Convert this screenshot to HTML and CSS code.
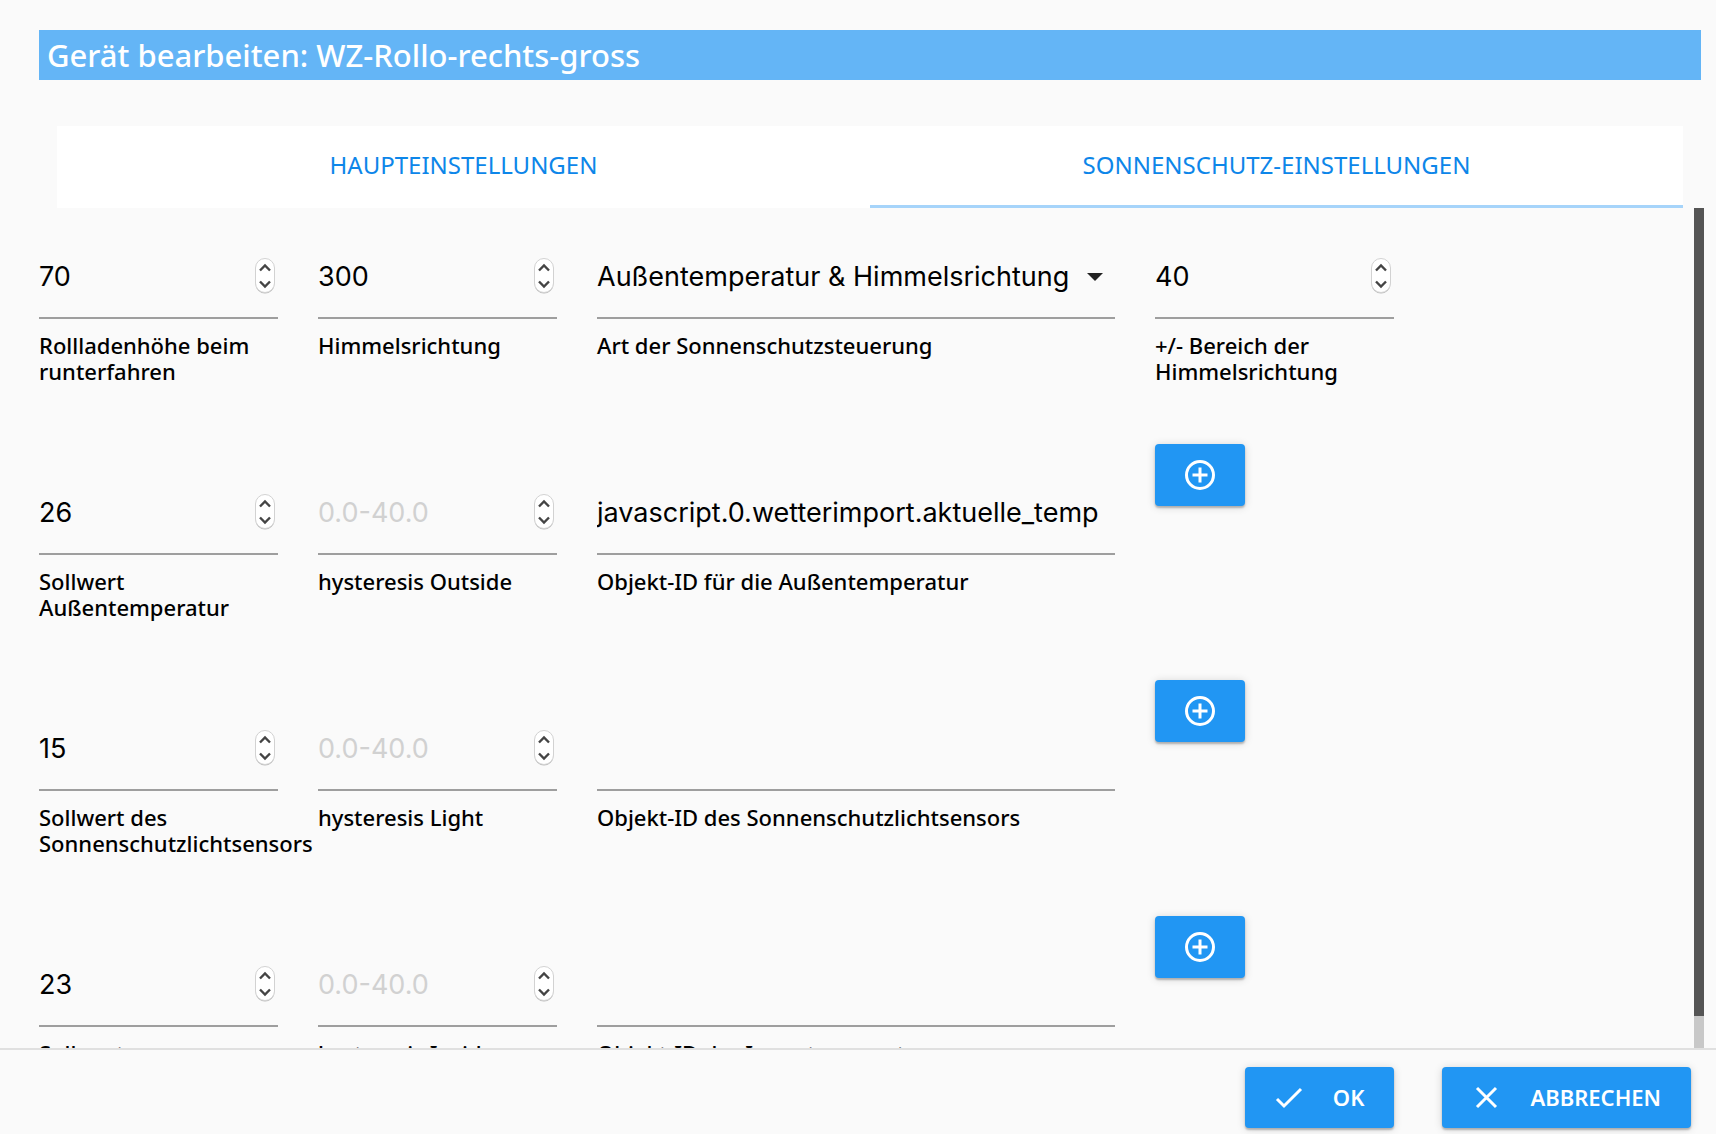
FILE: index.html
```html
<!DOCTYPE html>
<html lang="de">
<head>
<meta charset="utf-8">
<meta name="viewport" content="width=device-width, initial-scale=1">
<title>Gerät bearbeiten</title>
<link rel="stylesheet" href="styles.css">
</head>
<body>
<svg class="sprite" aria-hidden="true">
  <symbol id="spin" viewBox="0 0 20 36">
    <rect x="0.5" y="1.5" width="19" height="34" rx="9.5" fill="#b9b9b9"/>
    <rect x="0.5" y="0.5" width="19" height="34" rx="9.5" fill="#fff" stroke="#d2d2d2"/>
    <path d="M5 12.500l5-5 5 5M5 23.500l5 5 5-5" fill="none" stroke="#444" stroke-width="2.400"/>
  </symbol>
  <symbol id="plus" viewBox="0 0 30 30">
    <circle cx="15" cy="15" r="13.500" fill="none" stroke="#fff" stroke-width="3"/>
    <path d="M15 7.500v15M7.500 15h15" stroke="#fff" stroke-width="3"/>
  </symbol>
</svg>
<form class="dialog">
  <h1 class="title">Gerät bearbeiten: WZ-Rollo-rechts-gross</h1>
  <nav class="tabs">
    <a class="tab" href="#main">HAUPTEINSTELLUNGEN</a>
    <a class="tab tab-active" href="#sun">SONNENSCHUTZ-EINSTELLUNGEN</a>
  </nav>
  <div class="body">
    <div class="rows" id="sun">
      <div class="row">
        <div class="field">
          <div class="control"><input class="input" id="height" type="number" value="70"><svg class="spin"><use href="#spin"/></svg></div>
          <label class="label" for="height">Rollladenhöhe beim runterfahren</label>
        </div>
        <div class="field">
          <div class="control"><input class="input" id="direction" type="number" value="300"><svg class="spin"><use href="#spin"/></svg></div>
          <label class="label" for="direction">Himmelsrichtung</label>
        </div>
        <div class="field field-wide">
          <div class="control">
            <select class="input" id="type"><option>Außentemperatur &amp; Himmelsrichtung</option></select>
            <svg class="caret" viewBox="0 0 16 8"><path d="M0 0h16l-8 8z" fill="#222"/></svg>
          </div>
          <label class="label" for="type">Art der Sonnenschutzsteuerung</label>
        </div>
        <div class="field">
          <div class="control"><input class="input" id="range" type="number" value="40"><svg class="spin"><use href="#spin"/></svg></div>
          <label class="label" for="range">+/- Bereich der Himmelsrichtung</label>
        </div>
      </div>
      <div class="row">
        <div class="field">
          <div class="control"><input class="input" id="outside" type="number" value="26"><svg class="spin"><use href="#spin"/></svg></div>
          <label class="label" for="outside">Sollwert Außentemperatur</label>
        </div>
        <div class="field">
          <div class="control"><input class="input" id="hyst-outside" type="number" placeholder="0.0-40.0"><svg class="spin"><use href="#spin"/></svg></div>
          <label class="label" for="hyst-outside">hysteresis Outside</label>
        </div>
        <div class="field field-wide">
          <div class="control"><input class="input" id="id-outside" type="text" value="javascript.0.wetterimport.aktuelle_temp"></div>
          <label class="label" for="id-outside">Objekt-ID für die Außentemperatur</label>
        </div>
        <button class="btn btn-add" type="button" aria-label="Objekt-ID wählen"><svg class="plus"><use href="#plus"/></svg></button>
      </div>
      <div class="row">
        <div class="field">
          <div class="control"><input class="input" id="light" type="number" value="15"><svg class="spin"><use href="#spin"/></svg></div>
          <label class="label" for="light">Sollwert des Sonnenschutzlichtsensors</label>
        </div>
        <div class="field">
          <div class="control"><input class="input" id="hyst-light" type="number" placeholder="0.0-40.0"><svg class="spin"><use href="#spin"/></svg></div>
          <label class="label" for="hyst-light">hysteresis Light</label>
        </div>
        <div class="field field-wide">
          <div class="control"><input class="input" id="id-light" type="text"></div>
          <label class="label" for="id-light">Objekt-ID des Sonnenschutzlichtsensors</label>
        </div>
        <button class="btn btn-add" type="button" aria-label="Objekt-ID wählen"><svg class="plus"><use href="#plus"/></svg></button>
      </div>
      <div class="row">
        <div class="field">
          <div class="control"><input class="input" id="inside" type="number" value="23"><svg class="spin"><use href="#spin"/></svg></div>
          <label class="label" for="inside">Sollwert Innentemperatur</label>
        </div>
        <div class="field">
          <div class="control"><input class="input" id="hyst-inside" type="number" placeholder="0.0-40.0"><svg class="spin"><use href="#spin"/></svg></div>
          <label class="label" for="hyst-inside">hysteresis Inside</label>
        </div>
        <div class="field field-wide">
          <div class="control"><input class="input" id="id-inside" type="text"></div>
          <label class="label" for="id-inside">Objekt-ID der Innentemperatur</label>
        </div>
        <button class="btn btn-add" type="button" aria-label="Objekt-ID wählen"><svg class="plus"><use href="#plus"/></svg></button>
      </div>
    </div>
    <div class="scrollbar"><div class="thumb"></div></div>
  </div>
  <footer class="footer">
    <button class="btn btn-text" type="button">
      <svg class="icon" viewBox="0 0 28 28"><path d="M2 16l7 7L26 6" fill="none" stroke="#fff" stroke-width="3"/></svg>OK
    </button>
    <button class="btn btn-text" type="button">
      <svg class="icon" viewBox="0 0 28 28"><path d="M5 5l19 19M24 5L5 24" fill="none" stroke="#fff" stroke-width="3"/></svg>ABBRECHEN
    </button>
  </footer>
</form>
</body>
</html>
```
FILE: styles.css
```css
* { box-sizing: border-box; }

body {
  margin: 0;
  background: #fafafa;
  color: #000;
  font-family: "Noto Sans", "Open Sans", sans-serif;
}

.sprite { display: none; }

.dialog {
  display: flex;
  flex-direction: column;
  height: 100vh;
}

.title {
  margin: 30px 15px 46px 39px;
  padding: 0 8px;
  background: #64b5f6;
  color: #fff;
  font-size: 31px;
  font-weight: 500;
  line-height: 50px;
}

.tabs {
  display: flex;
  margin: 0 33px 0 57px;
  background: #fff;
}

.tab {
  flex: 1;
  padding-bottom: 2px;
  border-bottom: 3px solid transparent;
  color: #0d86e9;
  font-size: 24px;
  line-height: 77px;
  text-align: center;
  text-decoration: none;
}

.tab-active { border-bottom-color: #a6d4fa; }

.body {
  display: flex;
  flex: 1;
  min-height: 0;
  padding-right: 12px;
}

.rows {
  display: flex;
  flex: 1;
  flex-direction: column;
  gap: 60px;
  padding: 0 21px 0 39px;
  overflow: hidden;
}

.row {
  display: grid;
  grid-template-columns: repeat(6, minmax(0, 1fr));
  flex-shrink: 0;
  gap: 40px;
  align-items: start;
}

.field { padding-top: 23px; }

.field-wide { grid-column: span 2; }

.control {
  display: flex;
  align-items: center;
  height: 88px;
  margin-bottom: 13px;
  border-bottom: 2px solid #9e9e9e;
}

.input {
  flex: 1;
  min-width: 0;
  height: 100%;
  margin: 0;
  padding: 4px 0 0;
  border: 0;
  outline: 0;
  background: none;
  color: #000;
  font-family: Inter, sans-serif;
  font-size: 27px;
  appearance: none;
}

.input[type="number"] { appearance: textfield; }

.input::placeholder { color: #d1d1d1; }

.spin {
  width: 20px;
  height: 36px;
  margin: 3px 3px 0 0;
}

.caret {
  width: 16px;
  height: 8px;
  margin: 5px 12px 0 0;
}

.label {
  display: block;
  font-size: 22px;
  font-weight: 500;
  line-height: 26px;
}

.btn {
  display: flex;
  align-items: center;
  justify-content: center;
  border: 0;
  border-radius: 4px;
  background: #2196f3;
  color: #fff;
  box-shadow: 0 2px 2px rgba(0, 0, 0, .24), 0 1px 8px rgba(0, 0, 0, .16);
  font-family: inherit;
}

.btn-add {
  width: 90px;
  height: 62px;
  padding: 0;
}

.plus {
  width: 30px;
  height: 30px;
}

.btn-text {
  gap: 30px;
  height: 61px;
  padding: 0 30px 2px;
  font-size: 22px;
  font-weight: 600;
}

.icon {
  width: 28px;
  height: 28px;
}

.scrollbar {
  width: 10px;
  padding-bottom: 32px;
  background: #c8c8c8;
}

.thumb {
  height: 100%;
  background: #555;
}

.footer {
  display: flex;
  justify-content: flex-end;
  gap: 48px;
  padding: 17px 25px 6px;
  border-top: 2px solid #e0e0e0;
}
```
